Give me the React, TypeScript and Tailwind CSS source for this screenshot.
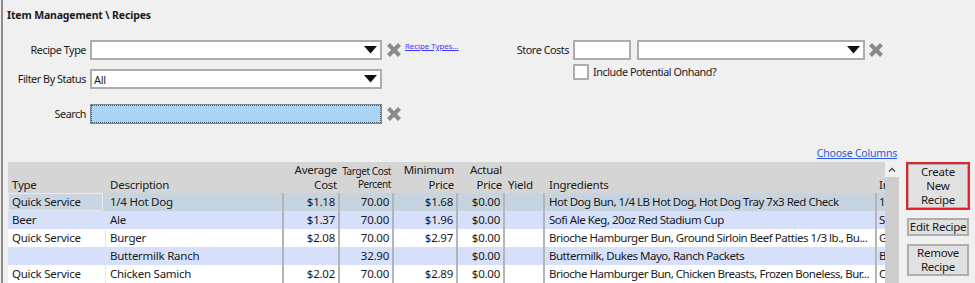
import React from "react";

const XIcon = () => (
  <svg width="16" height="16" viewBox="0 0 16 16" className="shrink-0">
    <line x1="2.5" y1="2.5" x2="13.5" y2="13.5" stroke="#8a8a8a" strokeWidth="4" />
    <line x1="13.5" y1="2.5" x2="2.5" y2="13.5" stroke="#8a8a8a" strokeWidth="4" />
  </svg>
);

const Arrow = () => (
  <svg width="13" height="8" viewBox="0 0 13 8" className="shrink-0">
    <polygon points="0,0 13,0 6.5,7.5" fill="#111" />
  </svg>
);

const Combo = ({ w, text }: { w: string; text?: string }) => (
  <div className={`${w} h-[20px] bg-white border-2 border-[#acacac] flex items-center justify-between pl-[2px] pr-[3px]`}>
    <span className="text-[11px] leading-none tracking-[-0.3px]">{text ?? ""}</span>
    <Arrow />
  </div>
);

type Row = {
  type: string;
  desc: string;
  avg: string;
  target: string;
  min: string;
  actual: string;
  ing: string;
  ini: string;
  bg: string;
};

const rows: Row[] = [
  { type: "Quick Service", desc: "1/4 Hot Dog", avg: "$1.18", target: "70.00", min: "$1.68", actual: "$0.00", ing: "Hot Dog Bun, 1/4 LB Hot Dog, Hot Dog Tray 7x3 Red Check", ini: "1", bg: "bg-[#c6d4e0]" },
  { type: "Beer", desc: "Ale", avg: "$1.37", target: "70.00", min: "$1.96", actual: "$0.00", ing: "Sofi Ale Keg, 20oz Red Stadium Cup", ini: "S", bg: "bg-[#d6e0fa]" },
  { type: "Quick Service", desc: "Burger", avg: "$2.08", target: "70.00", min: "$2.97", actual: "$0.00", ing: "Brioche Hamburger Bun, Ground Sirloin Beef Patties 1/3 lb., Bu...", ini: "G", bg: "bg-white" },
  { type: "", desc: "Buttermilk Ranch", avg: "", target: "32.90", min: "", actual: "$0.00", ing: "Buttermilk, Dukes Mayo, Ranch Packets", ini: "B", bg: "bg-[#d6e0fa]" },
  { type: "Quick Service", desc: "Chicken Samich", avg: "$2.02", target: "70.00", min: "$2.89", actual: "$0.00", ing: "Brioche Hamburger Bun, Chicken Breasts, Frozen Boneless, Bur...", ini: "C", bg: "bg-white" },
  { type: "", desc: "", avg: "", target: "", min: "", actual: "", ing: "", ini: "", bg: "bg-[#d6e0fa]" },
];

const cols = "grid grid-cols-[98px_178px_56px_54px_64px_47px_40px_332px_8px]";
const sep = "border-r-2 border-[#b5b5b5]";
const label = "text-right text-[10.8px] leading-none tracking-[-0.45px]";

export default function App() {
  return (
    <div className="w-[975px] h-[283px] overflow-hidden bg-[#f0f0f0] pl-[1px] font-['Noto_Sans',sans-serif] text-[#1a1a1a]">
      <div className="h-full border-l-2 border-[#8a8a8a] flex flex-col">
        {/* Title */}
        <div className="pt-[7px] pl-[4px] h-[23px] text-[10.5px] font-bold leading-[16px] tracking-[-0.15px]">
          Item Management \ Recipes
        </div>

        {/* Form */}
        <div className="mt-[17px] flex h-[95px]">
          <div className="w-[460px] flex flex-col">
            <div className="flex items-center h-[20px]">
              <div className={`w-[83px] ${label}`}>Recipe Type</div>
              <div className="ml-[4px]"><Combo w="w-[292px]" /></div>
              <div className="ml-[4px]"><XIcon /></div>
              <div className="ml-[3px] self-start mt-[1px] text-[7.8px] leading-[10px] text-[#3a3aff] underline">Recipe Types...</div>
            </div>
            <div className="flex items-center h-[20px] mt-[9px]">
              <div className={`w-[83px] ${label}`}>Filter By Status</div>
              <div className="ml-[4px]"><Combo w="w-[292px]" text="All" /></div>
            </div>
            <div className="flex items-center h-[20px] mt-[15px]">
              <div className={`w-[83px] ${label}`}>Search</div>
              <div className="ml-[4px] w-[292px] h-[20px] border border-[#7a8a98] bg-[#aad3f4]">
                <div className="w-full h-full border border-dotted border-[#4a5a6a]" />
              </div>
              <div className="ml-[4px]"><XIcon /></div>
            </div>
          </div>
          <div className="flex flex-col">
            <div className="flex items-center h-[20px]">
              <div className={`w-[106px] ${label}`}>Store Costs</div>
              <div className="ml-[4px] w-[58px] h-[20px] bg-white border-2 border-[#acacac]" />
              <div className="ml-[6px]"><Combo w="w-[228px]" /></div>
              <div className="ml-[3px]"><XIcon /></div>
            </div>
            <div className="flex items-center h-[16px] mt-[4px] ml-[110px]">
              <div className="w-[16px] h-[16px] bg-white border-2 border-[#acacac]" />
              <div className="ml-[4px] text-[10.8px] leading-none tracking-[-0.45px]">Include Potential Onhand?</div>
            </div>
          </div>
        </div>

        {/* Bottom */}
        <div className="mt-[11px] flex flex-1 min-h-0">
          <div className="ml-[5px] w-[891px] flex flex-col">
            <div className="h-[16px] flex justify-end pr-[2px]">
              <span className="text-[10.5px] leading-[14px] text-[#2a5bd8] underline tracking-[-0.2px]">Choose Columns</span>
            </div>
            <div className="flex flex-1 min-h-0">
              <div className="w-[877px] flex flex-col overflow-hidden">
                {/* header */}
                <div className={`${cols} h-[36px] bg-[#d5d5d5] text-[11.5px] leading-[15px] tracking-[-0.25px]`}>
                  <div className="flex items-end pl-[4px] pb-[1px]">Type</div>
                  <div className="flex items-end pl-[4px] pb-[1px]">Description</div>
                  <div className="flex items-end justify-end text-right pr-[3px] pb-[1px]">Average<br />Cost</div>
                  <div className="flex items-end justify-end text-right pr-[3px] pb-[2px] text-[10px] leading-[13px] tracking-[-0.4px]">Target Cost<br />Percent</div>
                  <div className="flex items-end justify-end text-right pr-[4px] pb-[1px]">Minimum<br />Price</div>
                  <div className="flex items-end justify-end text-right pr-[3px] pb-[1px]">Actual<br />Price</div>
                  <div className="flex items-end pl-[3px] pb-[1px]">Yield</div>
                  <div className="flex items-end pl-[4px] pb-[1px]">Ingredients</div>
                  <div className="flex items-end pl-[2px] pb-[1px] overflow-hidden">In</div>
                </div>
                {rows.map((r, i) => (
                  <div key={i} className={`${cols} h-[18px] ${r.bg} text-[11.5px] leading-[18px] tracking-[-0.25px] whitespace-nowrap`}>
                    {i === 0 ? (
                      <div className="border border-[#e3eaf1] bg-[#c9d6e2] pl-[3px] leading-[16px] mr-[3px]">{r.type}</div>
                    ) : (
                      <div className="pl-[4px] border-r border-[#e6e6e6]">{r.type}</div>
                    )}
                    <div className={`pl-[4px] ${sep}`}>{r.desc}</div>
                    <div className={`text-right pr-[3px] ${sep}`}>{r.avg}</div>
                    <div className={`text-right pr-[3px] ${sep}`}>{r.target}</div>
                    <div className={`text-right pr-[3px] ${sep}`}>{r.min}</div>
                    <div className={`text-right pr-[3px] ${sep}`}>{r.actual}</div>
                    <div className={sep}></div>
                    <div className={`pl-[4px] overflow-hidden tracking-[-0.48px] ${sep}`}>{r.ing}</div>
                    <div className="pl-[2px] overflow-hidden">{r.ini}</div>
                  </div>
                ))}
              </div>
              {/* scrollbar */}
              <div className="w-[14px] flex flex-col">
                <div className="h-[15px] bg-[#f0f0f0] flex items-center justify-center">
                  <svg width="8" height="5" viewBox="0 0 8 5">
                    <polyline points="1,4.5 4,1.5 7,4.5" fill="none" stroke="#505050" strokeWidth="1.5" />
                  </svg>
                </div>
                <div className="flex-1 bg-[#cdcdcd]" />
              </div>
            </div>
          </div>

          {/* Buttons */}
          <div className="ml-[7px] pt-[16px] w-[64px] flex flex-col text-[11.5px] leading-[14px] tracking-[-0.25px] whitespace-nowrap">
            <div className="h-[49px] border-2 border-[#e0262b] bg-[#e1e1e1]">
              <div className="w-full h-full border border-[#adadad] flex items-center justify-center text-center">
                Create<br />New<br />Recipe
              </div>
            </div>
            <div className="mt-[8px] mx-[1px] h-[24px] border-2 border-[#adadad] bg-[#e1e1e1] flex items-center justify-center">
              Edit Recipe
            </div>
            <div className="mt-[8px] mx-[1px] h-[35px] border-2 border-[#adadad] bg-[#e1e1e1] flex items-center justify-center text-center">
              Remove<br />Recipe
            </div>
            <div className="mt-[7px] mx-[1px] h-[30px] border-2 border-[#adadad] bg-[#e1e1e1]" />
          </div>
        </div>
      </div>
    </div>
  );
}
